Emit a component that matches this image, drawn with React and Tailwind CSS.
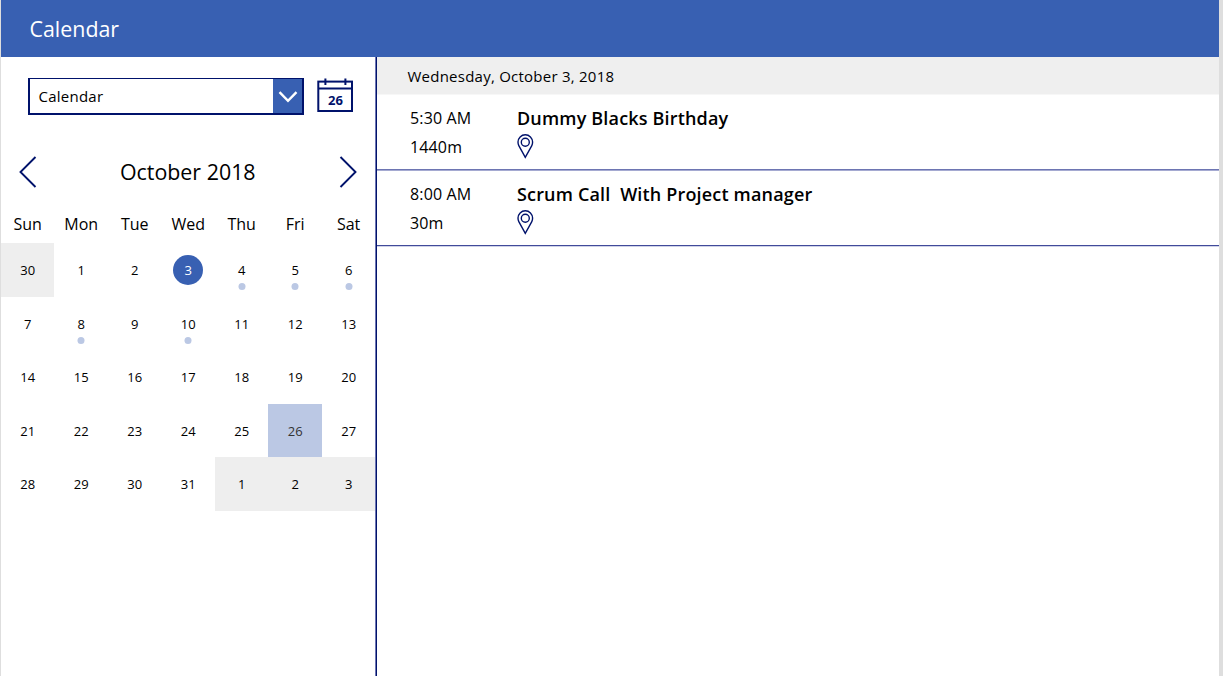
const EVENT_DAYS = [4, 5, 6, 8, 10];
const WEEKDAYS = ["Sun", "Mon", "Tue", "Wed", "Thu", "Fri", "Sat"];

const days = [
  { n: 30, outside: true },
  ...Array.from({ length: 31 }, (_, i) => ({
    n: i + 1,
    selected: i + 1 === 3,
    today: i + 1 === 26,
    event: EVENT_DAYS.includes(i + 1),
  })),
  { n: 1, outside: true },
  { n: 2, outside: true },
  { n: 3, outside: true },
];

const events = [
  {
    time: "5:30 AM",
    length: "1440m",
    title: "Dummy Blacks Birthday",
    border: "border-[#6d75b2] shadow-[0_1px_0_#a5aad1]",
  },
  {
    time: "8:00 AM",
    length: "30m",
    title: "Scrum Call  With Project manager",
    border: "border-[#414b9a] shadow-[0_1px_0_#cfd2e7]",
  },
];

function CalendarIcon() {
  return (
    <div className="relative h-[35px] w-9">
      <svg className="block" width="36" height="35" viewBox="0 0 36 35" fill="none" stroke="#00126b">
        <rect x="1.3" y="3.6" width="33.7" height="29.4" strokeWidth="2" />
        <path d="M1 10.5H36" strokeWidth="2" />
        <path d="M8.4 0.5V7M28.4 0.5V7" strokeWidth="2" />
      </svg>
      <span className="absolute inset-x-0 top-[13px] pl-px text-center text-[13px] leading-[18px] font-bold text-[#00126b]">
        26
      </span>
    </div>
  );
}

function Pin() {
  return (
    <svg className="mt-px block" width="17" height="25" viewBox="0 0 17 25" fill="none" stroke="#00126b" strokeWidth="1.4">
      <path d="M8.3 23.3L1.8 11.6C1.2 10.5 1 9.3 1 8.1A7.3 7.3 0 0 1 15.6 8.1C15.6 9.3 15.4 10.5 14.8 11.6Z" />
      <circle cx="8.3" cy="8.2" r="4" />
    </svg>
  );
}

function Chevron({ d }) {
  return (
    <svg width="18" height="32" viewBox="0 0 18 32" fill="none" stroke="#00126b" strokeWidth="1.9">
      <path d={d} />
    </svg>
  );
}

function Day({ day }) {
  const bg = day.outside ? "bg-[#eeeeee]" : day.today ? "bg-[#bbc8e4] text-[#333333]" : "";
  return (
    <div className={`relative flex items-center justify-center ${bg}`}>
      <span
        className={`flex size-[30px] items-center justify-center rounded-full pt-[1.7px] ${day.selected ? "bg-[#3860b2] text-white" : ""}`}
      >
        {day.n}
      </span>
      {day.event && <i className="absolute top-[39.7px] left-1/2 size-[7px] -translate-x-1/2 rounded-full bg-[#bbc8e4]" />}
    </div>
  );
}

export default function App() {
  return (
    <div className="flex h-[676px] w-[1223px] flex-col overflow-hidden border-r-4 border-l border-r-[#dedede] border-l-[#dedede] bg-white font-['Open_Sans',sans-serif] text-black">
      <header className="flex h-[57px] shrink-0 items-center bg-[#3860b2] pl-[28.5px] text-[21.4px] text-white">
        <h1 className="pt-0.5">Calendar</h1>
      </header>
      <div className="flex min-h-0 flex-1">
        <aside className="w-[375px] shrink-0 border-r border-[#6d75b2]">
          <div className="flex items-start pt-[21px] pl-[27px]">
            <div className="flex h-[37px] w-[276px] border-2 border-t border-[#00126b]">
              <span className="flex flex-1 items-center pt-px pl-[8.5px] text-[15px] tracking-[0.24px]">Calendar</span>
              <span className="flex w-[29px] items-center justify-center bg-[#3860b2] pt-px">
                <svg width="20" height="12" viewBox="0 0 20 12" fill="none" stroke="white" strokeWidth="2.4">
                  <path d="M1.5 1.2L10 9.8L18.5 1.2" />
                </svg>
              </span>
            </div>
            <div className="ml-[13px]">
              <CalendarIcon />
            </div>
          </div>
          <div className="mt-[41px] flex h-8 items-center justify-between pr-[18px] pl-[17.5px]">
            <Chevron d="M16.5 1L1.5 16L16.5 31" />
            <h2 className="text-[21.4px]">October 2018</h2>
            <Chevron d="M1.5 1L16.5 16L1.5 31" />
          </div>
          <div className="mt-5 -mr-[0.4px] grid h-[35.3px] grid-cols-7 text-center text-[16px] leading-[32px]">
            {WEEKDAYS.map((d) => (
              <span key={d}>{d}</span>
            ))}
          </div>
          <div className="-mr-[0.4px] grid h-[267.7px] grid-cols-7 grid-rows-5 text-[13px]">
            {days.map((day, i) => (
              <Day key={i} day={day} />
            ))}
          </div>
        </aside>
        <main className="flex-1 border-l border-[#00126b]">
          <div className="flex h-[38px] items-center border-b border-[#f7f7f7] bg-[#efefef] pt-px pl-[30.5px] text-[15px] tracking-[0.24px]">
            Wednesday, October 3, 2018
          </div>
          <div className="-mt-px">
            {events.map((e) => (
              <article key={e.time} className={`flex h-[76px] border-b pt-[9px] pl-[33px] ${e.border}`}>
                <div className="w-[107px] pt-px text-[16px] leading-[29px] tracking-[0.14px]">
                  <p>{e.time}</p>
                  <p>{e.length}</p>
                </div>
                <div>
                  <h3 className="text-[18px] leading-[30px] font-semibold tracking-[0.17px] whitespace-pre">{e.title}</h3>
                  <Pin />
                </div>
              </article>
            ))}
          </div>
        </main>
      </div>
    </div>
  );
}
